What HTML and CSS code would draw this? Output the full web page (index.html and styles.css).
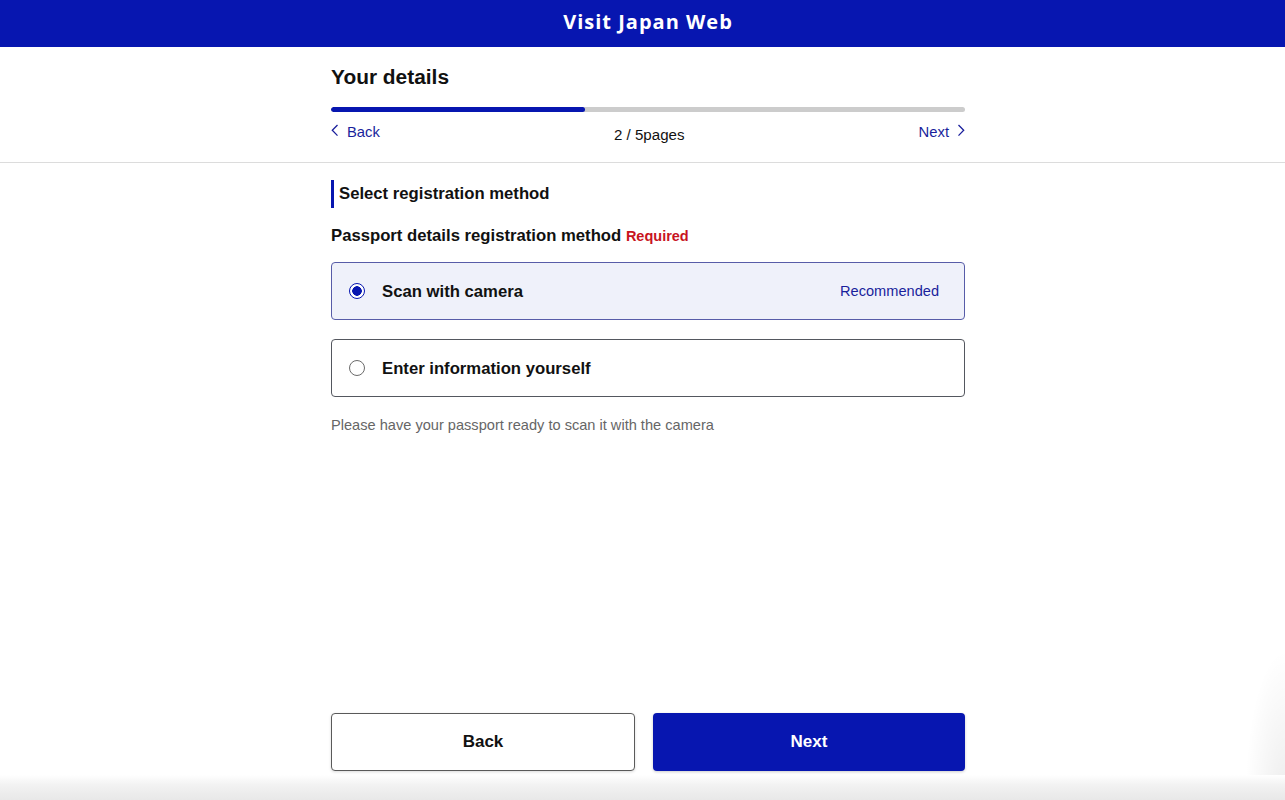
FILE: index.html
```html
<!DOCTYPE html>
<html lang="en">

<head>
    <meta charset="UTF-8">
    <meta name="viewport" content="width=device-width, initial-scale=1.0">
    <title>Visit Japan Web</title>
    <link rel="stylesheet" href="styles.css">
</head>

<body>
    <!-- top bar -->
    <header class="app-bar">
        <div class="app-title">Visit Japan Web</div>
    </header>

    <!-- page heading and progress -->
    <div class="step-head">
        <div class="wrap">
            <h1 class="page-title">Your details</h1>
            <div class="progress">
                <div class="progress-fill"></div>
            </div>
            <div class="step-nav">
                <a class="step-link" href="#">
                    <svg width="8" height="13" viewBox="0 0 8 13" fill="none" stroke="currentColor" stroke-width="1.3">
                        <path d="M6.5 1 1.3 6.3l5.2 5.3" />
                    </svg>
                    <span>Back</span>
                </a>
                <span class="step-count">2 / 5pages</span>
                <a class="step-link" href="#">
                    <span>Next</span>
                    <svg width="8" height="13" viewBox="0 0 8 13" fill="none" stroke="currentColor" stroke-width="1.3">
                        <path d="M1.5 1 6.7 6.3l-5.2 5.3" />
                    </svg>
                </a>
            </div>
        </div>
    </div>

    <!-- form -->
    <main class="content">
        <div class="wrap">
            <h2 class="section-title">Select registration method</h2>
            <div class="field-label">Passport details registration method <span class="required">Required</span></div>

            <div class="option option-selected">
                <span class="radio radio-on"></span>
                <span class="option-text">Scan with camera</span>
                <span class="option-tag">Recommended</span>
            </div>
            <div class="option">
                <span class="radio"></span>
                <span class="option-text">Enter information yourself</span>
            </div>

            <p class="hint">Please have your passport ready to scan it with the camera</p>
        </div>
    </main>

    <!-- bottom buttons -->
    <div class="actions">
        <div class="wrap actions-row">
            <button class="btn btn-back">Back</button>
            <button class="btn btn-next">Next</button>
        </div>
    </div>
    <div class="bottom-shade"></div>
</body>

</html>
```

FILE: styles.css
```css
/* base */
html,
body {
    height: 100%;
}

body {
    margin: 0;
    padding-left: 11px;
    display: flex;
    flex-direction: column;
    font-family: "Liberation Sans", Arial, sans-serif;
    color: #111;
    background-color: #fff;
    background-image: radial-gradient(ellipse 40px 150px at 100% 100%, rgba(0, 0, 0, 0.07), rgba(0, 0, 0, 0));
    background-repeat: no-repeat;
    background-position: right bottom;
    background-size: 60px 200px;
    overflow: hidden;
}

.wrap {
    width: 634px;
    margin: 0 auto;
}

/* top bar */
.app-bar {
    background-color: #0716b0;
    height: 47px;
    margin-left: -11px;
    padding-left: 11px;
    display: flex;
    align-items: center;
    justify-content: center;
}

.app-title {
    color: #fff;
    font-family: "Open Sans", sans-serif;
    font-weight: 700;
    font-size: 20px;
    letter-spacing: 1px;
    margin-top: -4px;
}

/* heading and progress */
.step-head {
    padding: 16px 0 19px;
    border-bottom: 1px solid #dcdcdc;
    margin-left: -11px;
    padding-left: 11px;
}

.page-title {
    margin: 0 0 16px;
    font-size: 20.9px;
    line-height: 28px;
    font-weight: 700;
}

.progress {
    height: 5px;
    border-radius: 3px;
    background-color: #cccccc;
    overflow: hidden;
}

.progress-fill {
    width: 40%;
    height: 100%;
    background-color: #0716b0;
    border-radius: 3px;
}

.step-nav {
    margin-top: 11px;
    display: flex;
    justify-content: space-between;
    align-items: center;
    height: 20px;
}

.step-link {
    display: flex;
    align-items: center;
    gap: 8px;
    color: #1a1f9c;
    text-decoration: none;
    font-size: 14.8px;
    margin-top: -2px;
}

.step-link svg {
    margin-top: -3px;
}

.step-count {
    font-size: 15.1px;
    margin-top: 3px;
}

/* form */
.content {
    flex: 1;
    padding-top: 17px;
}

.section-title {
    margin: 0;
    border-left: 3px solid #0716b0;
    padding-left: 5px;
    font-size: 16.7px;
    line-height: 28px;
    font-weight: 700;
}

.field-label {
    margin-top: 17px;
    font-size: 16.7px;
    line-height: 22px;
    font-weight: 700;
}

.required {
    color: #c8141e;
    font-size: 14.5px;
}

.option {
    margin-top: 15px;
    height: 58px;
    box-sizing: border-box;
    border: 1px solid #54575f;
    border-radius: 4px;
    display: flex;
    align-items: center;
    padding: 0 25px 0 17px;
    background-color: #fff;
}

.option + .option {
    margin-top: 19px;
}

.option-selected {
    background-color: #eff1fa;
    border-color: #575ca8;
}

.radio {
    width: 16px;
    height: 16px;
    box-sizing: border-box;
    border: 1px solid #6b6b6b;
    border-radius: 50%;
    margin-right: 17px;
    flex-shrink: 0;
}

.radio-on {
    border: 1.5px solid #0716b0;
    background: radial-gradient(circle, #0716b0 0 4.5px, #fff 5px);
}

.option-text {
    font-size: 16.7px;
    font-weight: 700;
    flex: 1;
    margin-top: 1px;
}

.option-tag {
    color: #1a1f9c;
    font-size: 14.6px;
}

.hint {
    margin: 18px 0 0;
    font-size: 14.6px;
    line-height: 20px;
    color: #666;
}

/* bottom buttons */
.actions {
    padding-bottom: 4px;
}

.actions-row {
    display: flex;
    gap: 18px;
}

.btn {
    height: 58px;
    border-radius: 4px;
    font-family: "Liberation Sans", Arial, sans-serif;
    font-size: 17px;
    font-weight: 700;
    cursor: pointer;
}

.btn-back {
    width: 304px;
    background-color: #fff;
    border: 1px solid #5a5a5a;
    color: #111;
    box-shadow: 0 1px 3px rgba(0, 0, 0, 0.15);
}

.btn-next {
    flex: 1;
    background-color: #0716b0;
    border: none;
    color: #fff;
    box-shadow: 0 1px 3px rgba(0, 0, 0, 0.2);
}

.bottom-shade {
    height: 25px;
    margin-left: -11px;
    background: linear-gradient(#ffffff, #f2f2f2 40%, #e8e8e8);
}
```
